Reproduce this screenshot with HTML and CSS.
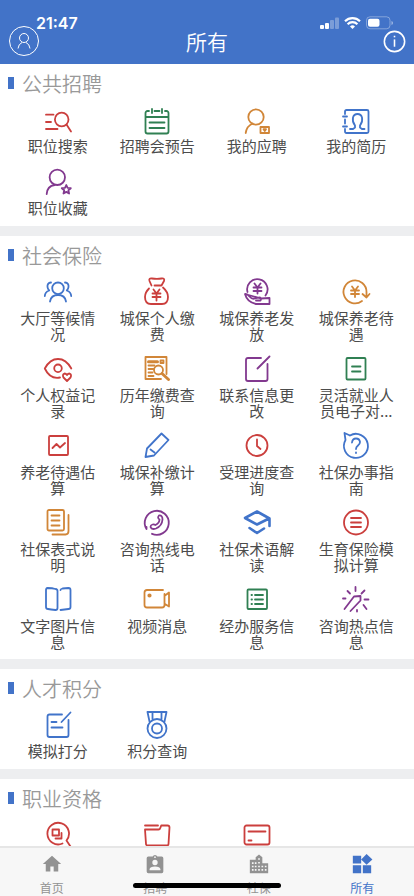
FILE: index.html
```html
<!DOCTYPE html>
<html lang="zh-CN">
<head>
<meta charset="utf-8">
<meta name="viewport" content="width=device-width, initial-scale=1">
<title>所有</title>
<link rel="stylesheet" href="styles.css">
</head>
<body>
<div class="app">
  <header class="header">
    <div class="status">
      <span class="time">21:47</span>
      <svg class="status-icons" viewBox="0 0 74 14" aria-hidden="true">
        <g fill="#fff">
          <rect x="0" y="9" width="4" height="4" rx="1"/><rect x="5" y="7" width="4" height="6" rx="1"/>
          <rect x="10" y="4" width="4" height="9" rx="1" opacity=".3"/><rect x="15" y="1.500" width="4" height="11.500" rx="1" opacity=".3"/>
          <path d="M32.500 13l-2.500-2.600a3.600 3.600 0 0 1 5 0z"/>
          <rect x="48" y="2.800" width="11.500" height="8" rx="2"/>
          <path d="M71.500 5v4q1.500-.5 1.500-2t-1.500-2z" opacity=".5"/>
        </g>
        <path d="M25 5.200a10.800 10.800 0 0 1 15 0M27.600 8.200a7 7 0 0 1 9.800 0" fill="none" stroke="#fff" stroke-width="2.200"/>
        <rect x="46.500" y=".8" width="23.500" height="12" rx="3.500" fill="none" stroke="#fff" opacity=".35"/>
      </svg>
    </div>
    <button class="round" aria-label="个人">
      <svg viewBox="0 0 32 32"><circle cx="16" cy="16" r="14.500"/><circle cx="16" cy="13" r="4.500"/><path d="M10 23.500q.5-4.500 4-6M22 23.500q-.5-4.500-4-6" /></svg>
    </button>
    <h1>所有</h1>
    <button class="round info" aria-label="信息">
      <svg viewBox="0 0 22 22"><circle cx="11" cy="11" r="9.700"/><path d="M11 9v7"/><path d="M11 5.500v1.500"/></svg>
    </button>
  </header>

  <main class="content">
    <section class="group">
      <h2>公共招聘</h2>
      <div class="grid">
        <button class="item red"><svg viewBox="0 0 28 28"><path d="M2 8.700h7.500M2 16h5M2 23h11.500M22.500 18.500l4.500 7"/><circle cx="17.700" cy="13.500" r="6.800"/></svg><span>职位搜索</span></button>
        <button class="item green"><svg viewBox="0 0 28 28"><path d="M6 5H4.500a2 2 0 0 0-2 2v18.500a2 2 0 0 0 2 2h19a2 2 0 0 0 2-2V7a2 2 0 0 0-2-2H22M11.500 5h5M9 3v4M19 3v4M2.500 11h23M6.500 16.500h15M6.500 22h15"/></svg><span>招聘会预告</span></button>
        <button class="item orange"><svg viewBox="0 0 28 28"><circle cx="13" cy="11" r="7.700"/><path d="M2.700 27q1-7 7-9.500M17.500 21h8.500v6h-8.500z"/><path d="M20.500 23.200h2.500l-1.200 1.800z"/></svg><span>我的应聘</span></button>
        <button class="item blue"><svg viewBox="0 0 28 28"><path d="M3 8V5.500Q3 4 4.500 4H25q1.500 0 1.500 1.500v20q0 1.500-1.500 1.500H4.500Q3 27 3 25.500V23M3 13.500v4M1 10.500h4M1 20.500h4"/><path d="M8 23h3l2-1.500v-2q-3-4-2-8 1-3.500 4.500-3.500t4.500 3.500q1 4-2 8v2l2 1.500h2.500"/></svg><span>我的简历</span></button>
        <button class="item purple"><svg viewBox="0 0 28 28"><circle cx="13.300" cy="9.300" r="7.700"/><path d="M2.700 26q.5-8 8-9"/><path d="M22.300 17l1.300 2.900 3.200.3-2.400 2.100.7 3.200-2.800-1.600-2.800 1.600.7-3.200-2.400-2.100 3.200-.3z"/></svg><span>职位收藏</span></button>
      </div>
    </section>

    <section class="group">
      <h2>社会保险</h2>
      <div class="grid">
        <button class="item blue"><svg viewBox="0 0 28 28"><circle cx="14" cy="10.300" r="5.800"/><path d="M6 23.500q1-6.500 8-6.500t8 6.500M7 4.500Q3 5 3.500 9q.2 2 1.700 3.500Q1 14 .8 18M21 4.500q4 .5 3.500 4.500-.2 2-1.700 3.500 4.200 1.500 4.400 5.500"/></svg><span>大厅等候情况</span></button>
        <button class="item red"><svg viewBox="0 0 28 28"><path d="M8.500 7.500L6.500 3Q5.500 0 9 .5q5 .8 9.500 0 3.500-.5 2.500 2.500L18.500 7.500H11.500M6 10.500q-4 4-4 8.500 0 7 6 7h11q6 0 6-7 0-5-5-9.500"/><path d="M10.500 11.500l3 4 3-4M9.500 15.500h8M9.500 19h8M13.500 15.500v7"/></svg><span>城保个人缴费</span></button>
        <button class="item purple"><svg viewBox="0 0 28 28"><path d="M4.500 14A10.200 10.200 0 1 1 22.500 17.500M2 16q2-.5 5 3 2 2.500 5 1.500l4-1q3 0 1.500 3H13M18 20.500l8.500-.5v6H13Q4 24 2 16z"/><path d="M11.500 5.500l3 4 3-4M10.500 9.500h8M10.500 13h8M14.500 9.500v6"/></svg><span>城保养老发放</span></button>
        <button class="item orange"><svg viewBox="0 0 28 28"><path d="M20 23A11.500 11.500 0 1 1 24.500 14v5M20.500 16l4 3.500 3-3.500"/><path d="M10 8.500l3 4 3-4M9 12.500h8M9 16h8M13 12.500v6.500"/></svg><span>城保养老待遇</span></button>

        <button class="item red"><svg viewBox="0 0 28 28"><path d="M16 22.500Q6 24.500.8 13.500 6 4 14 4t13.300 9.500M23 26l-3.500-3.500q-1.500-3 1-4 1.500 0 2.500 1.500 1-1.500 2.500-1.500 2.500 1 1 4z"/><circle cx="14" cy="13.300" r="3.800"/></svg><span>个人权益记录</span></button>
        <button class="item orange"><svg viewBox="0 0 28 28"><path d="M18 24H2.500V2h21v17M5.500 14h5M5.500 17.500h4M5.500 21h5M5.500 10.500h6"/><path d="M5.500 6.700h9" stroke-width="3"/><path d="M17.500 5.500h3v2.500h-3z"/><circle cx="15.500" cy="15" r="4.500"/><path d="M19 18.500l6.500 6" stroke-width="3"/></svg><span>历年缴费查询</span></button>
        <button class="item purple"><svg viewBox="0 0 28 28"><path d="M18 3H5Q3 3 3 5v19q0 2 2 2h17.500q2 0 2-2V9M14.500 13.500L26.500 1.500"/></svg><span>联系信息更改</span></button>
        <button class="item green"><svg viewBox="0 0 28 28"><rect x="4.500" y="3" width="19" height="21.500" rx="1"/><path d="M10 11.500h8.500M10 16.500h8.500"/></svg><span>灵活就业人员电子对...</span></button>

        <button class="item red"><svg viewBox="0 0 28 28"><rect x="5" y="4" width="19" height="19" rx="1"/><path d="M8.500 16l4-4 3.500 3.500 5-4.500"/></svg><span>养老待遇估算</span></button>
        <button class="item blue"><svg viewBox="0 0 28 28"><path d="M18.500 1.500l7 6.500L11 23.500 2.500 25 4 16.500zM7.500 17.500l4 3"/></svg><span>城保补缴计算</span></button>
        <button class="item red"><svg viewBox="0 0 28 28"><circle cx="14" cy="13.500" r="10.500"/><path d="M14 7.500v6.500l3.500 3"/></svg><span>受理进度查询</span></button>
        <button class="item blue"><svg viewBox="0 0 28 28"><path d="M8 3.500A12 12 0 1 1 3.500 8L2.500 1 8 3.500Q12 1 16 2M10 10.500q.5-4 4-4t4 3.500q0 2-2 3.500-2 1.500-2 3.500M14 20.500v.5"/></svg><span>社保办事指南</span></button>

        <button class="item orange"><svg viewBox="0 0 28 28"><rect x="3.500" y="1" width="16.500" height="20.500" rx="1.500"/><path d="M7.500 6.500h8M7.500 11.500h8M7.500 16.500h8M24.500 6v16q0 3.500-3 3.500H8.500"/></svg><span>社保表式说明</span></button>
        <button class="item purple"><svg viewBox="0 0 28 28"><path d="M3.500 20A12 12 0 1 1 9 24.800M3.500 20v-2"/><path d="M16 6.500q3.500-.5 3.500 4-.5 6.500-6.500 9-4.500 1.500-5.500-1.500 0-2 2-2.500 1.500-.5 3 .5 4-2 4-5.500-2.500-1.500-.5-4z"/></svg><span>咨询热线电话</span></button>
        <button class="item blue bold"><svg viewBox="0 0 28 28"><path d="M26.500 17V9.500L14 2.500 2 9l12 6.500 12-6M6.500 19l7.500 5 7-4.500"/></svg><span>社保术语解读</span></button>
        <button class="item red"><svg viewBox="0 0 28 28"><circle cx="14" cy="13.500" r="12"/><path d="M9 9h10M9 13.500h10M9 18h10"/></svg><span>生育保险模拟计算</span></button>

        <button class="item blue"><svg viewBox="0 0 28 28"><path d="M3.500 2q5 .2 8 1 2 .3 2 2v17q0 2-2 2-5-.5-7.500-1-2 0-2-2V4q0-2 1.500-2zM16.500 4q0-1 2-1.500l6-.5q2 0 2 2v17q0 2-2 2l-8 1"/></svg><span>文字图片信息</span></button>
        <button class="item orange"><svg viewBox="0 0 28 28"><path d="M20 4H4Q1.500 4 1.500 6.500V19q0 2.500 2.500 2.500h15q2.500 0 2.500-2.500V8M22 9.500l4-3v14l-4-2.500"/><circle cx="6.500" cy="9.500" r="1.200" fill="currentColor"/></svg><span>视频消息</span></button>
        <button class="item green"><svg viewBox="0 0 28 28"><rect x="4.500" y="3.500" width="19.500" height="19.500" rx="1"/><path d="M8.500 9h.5M12 9h8M8.500 13.500h.5M12 13.500h8M8.500 18h.5M12 18h8"/></svg><span>经办服务信息</span></button>
        <button class="item purple"><svg viewBox="0 0 28 28"><path d="M13.500 1v4M5.500 5l2.500 2.500M22.500 4.500L19.500 7.500M1 12.500h2.500M22.500 13.500h4M21.500 19l3 4M15 24v1.500M2.500 23L12 10.500l6.500-.5v4.500L8.500 25"/></svg><span>咨询热点信息</span></button>
      </div>
    </section>

    <section class="group">
      <h2>人才积分</h2>
      <div class="grid">
        <button class="item blue"><svg viewBox="0 0 28 28"><path d="M18 3.500H5.500q-2 0-2 2v18.500q0 2 2 2H22.500q2 0 2-2V9M7.500 11h5M7.500 16.500h11M17.500 11L26.500 1.500"/></svg><span>模拟打分</span></button>
        <button class="item blue"><svg viewBox="0 0 28 28"><path d="M6.500 10.500L4.500 1h19l-2 9.500M9.500 1v7M18.500 1v7"/><circle cx="14" cy="17.500" r="9.500"/><circle cx="14" cy="17.500" r="5"/></svg><span>积分查询</span></button>
      </div>
    </section>

    <section class="group">
      <h2>职业资格</h2>
      <div class="grid">
        <button class="item red"><svg viewBox="0 0 28 28"><path d="M18.500 22.500A10.800 10.800 0 1 1 22.500 19.500l4 6"/><path d="M8.500 8.500h6.500v6H8.500zM17.500 12v5.500h-6"/></svg></button>
        <button class="item red"><svg viewBox="0 0 28 28"><path d="M2 4.500h13M2 8.500h13.500q1.500 0 2-2l.7-2H24.500q2 0 2 2L25.500 23q0 1.500-2 1.500H5q-2 0-2-1.500z"/></svg></button>
        <button class="item red"><svg viewBox="0 0 28 28"><rect x="1.500" y="4.500" width="25" height="19" rx="2"/><path d="M5.500 10.500h17M5.500 19.500h3"/></svg></button>
      </div>
    </section>
  </main>

  <nav class="tabs">
    <a href="#home"><svg viewBox="0 0 24 24"><path d="M10 21v-6h4v6h5.500v-9H23L12 2 1 12h3.500v9z"/></svg>首页</a>
    <a href="#jobs"><svg viewBox="0 0 24 24"><path fill-rule="evenodd" d="M20 3h-5.200a3 3 0 0 0-5.600 0H4a2 2 0 0 0-2 2v16a2 2 0 0 0 2 2h16a2 2 0 0 0 2-2V5a2 2 0 0 0-2-2zM12 2.800a1 1 0 1 1 0 2 1 1 0 0 1 0-2zM12 7a3.200 3.200 0 1 1 0 6.400A3.200 3.200 0 0 1 12 7zm6.500 12.500h-13V18q.5-3 6.500-3t6.500 3z"/></svg>招聘</a>
    <a href="#insurance"><svg viewBox="0 0 24 24"><path fill-rule="evenodd" d="M16 11V4l-4-3.500L8 4v3H1v16h22V11zM3.500 10h2v2h-2zm0 4h2v2h-2zm0 4h2v2h-2zM11 5h2v2h-2zm0 4.500h2v2h-2zm0 4.500h2v2h-2zm0 4h2v2h-2zM7 10h2v2H7zm0 4h2v2H7zm0 4h2v2H7zM15 14h2v2h-2zm0 4h2v2h-2zm4-4h2v2h-2zm0 4h2v2h-2z"/></svg>社保</a>
    <a href="#all" class="active" aria-current="page"><svg viewBox="0 0 24 24"><path d="M1 2h10v9.500H1zM1 13.500h10V23H1zM13 13.500h10V23H13zM17.500 0l7 6.500-7 6.500L11 6.500z"/></svg>所有</a>
  </nav>
  <div class="home-indicator"></div>
</div>
</body>
</html>
```
FILE: styles.css
```css
* {
  box-sizing: border-box;
}

body {
  margin: 0;
  background: #edeef0;
  font-family: "Noto Sans CJK SC", sans-serif;
  color: #4c4c4c;
}

button {
  margin: 0;
  padding: 0;
  border: 0;
  background: none;
  font: inherit;
  color: inherit;
}

svg {
  display: block;
  overflow: visible;
}

.app {
  position: relative;
  display: flex;
  flex-direction: column;
  height: 100vh;
  overflow: hidden;
}

.header {
  position: relative;
  flex: none;
  display: flex;
  align-items: center;
  justify-content: space-between;
  height: 64px;
  padding: 18px 8px 0;
  background: #4273c8;
  color: #fff;
}

.header h1 {
  margin: 0;
  font-size: 21px;
  line-height: 44px;
  font-weight: 350;
}

.round {
  display: flex;
  justify-content: flex-end;
  width: 32px;
}

.round svg {
  width: 32px;
  fill: none;
  stroke: #fff;
  stroke-width: 1;
}

.info svg {
  width: 23px;
  stroke-width: 1.5;
}

.status {
  position: absolute;
  top: 14px;
  left: 36px;
  right: 20px;
  display: flex;
  align-items: center;
  justify-content: space-between;
  height: 18px;
}

.time {
  font: 600 16px/18px Inter, sans-serif;
}

.status-icons {
  width: 74px;
  height: 14px;
}

.content {
  flex: 1;
  min-height: 0;
  overflow: hidden;
  display: flex;
  flex-direction: column;
  gap: 10px;
}

.group {
  flex: none;
  background: #fff;
}

.group h2 {
  display: flex;
  align-items: center;
  gap: 8px;
  height: 38px;
  margin: 0;
  padding-left: 8px;
  font-size: 20px;
  font-weight: 350;
  color: #999;
}

.group h2::before {
  content: "";
  width: 6px;
  height: 12px;
  background: #4273c8;
}

.grid {
  display: grid;
  grid-template-columns: repeat(4, 1fr);
  padding: 0 8px;
}

.item {
  display: flex;
  flex-direction: column;
  align-items: center;
  gap: 4px;
  min-height: 62px;
  padding: 4px 10px 9px;
  font-size: 15px;
  line-height: 16px;
}

.item svg {
  flex: none;
  width: 28px;
  height: 28px;
  fill: none;
  stroke: currentColor;
  stroke-width: 1.8;
  stroke-linecap: round;
  stroke-linejoin: round;
}

.item span {
  color: #4c4c4c;
}

.bold svg {
  stroke-width: 2.6;
}

.red {
  color: #cb3f3d;
}

.green {
  color: #308053;
}

.orange {
  color: #d18638;
}

.blue {
  color: #4174ca;
}

.purple {
  color: #82398f;
}

.tabs {
  flex: none;
  display: grid;
  grid-template-columns: repeat(4, 1fr);
  height: 50px;
  border-top: 2px solid #e6e6e6;
  background: #f7f7f7;
}

.tabs a {
  display: flex;
  flex-direction: column;
  align-items: center;
  gap: 6px;
  padding-top: 6px;
  font-size: 12px;
  line-height: 16px;
  color: #929292;
  text-decoration: none;
}

.tabs svg {
  width: 20px;
  height: 20px;
  fill: currentColor;
}

.tabs .active {
  color: #4273c8;
}

.home-indicator {
  position: absolute;
  bottom: 8px;
  left: 50%;
  width: 148px;
  height: 5px;
  border-radius: 3px;
  background: #000;
  transform: translateX(-50%);
}
```
